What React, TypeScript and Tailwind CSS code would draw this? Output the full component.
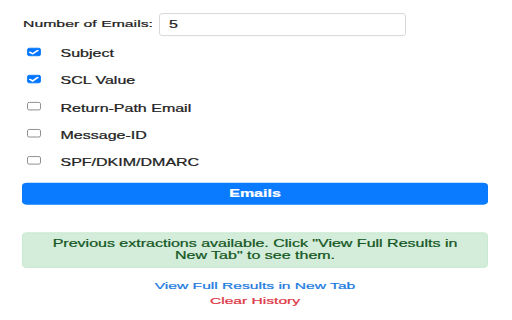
import React from "react";

const items: { label: string; checked: boolean }[] = [
  { label: "Subject", checked: true },
  { label: "SCL Value", checked: true },
  { label: "Return-Path Email", checked: false },
  { label: "Message-ID", checked: false },
  { label: "SPF/DKIM/DMARC", checked: false },
];

function Box({ checked }: { checked: boolean }) {
  return (
    <span className="relative ml-[5px] mb-[6px] w-[13.5px] h-[13.5px] shrink-0">
      <input
        type="checkbox"
        defaultChecked={checked}
        className="appearance-none m-0 block w-full h-full rounded-[2.5px] border border-[#767676] bg-white checked:bg-[#0075ff] checked:border-[#0075ff]"
      />
      {checked && (
        <svg
          viewBox="0 0 14 14"
          className="absolute inset-0 w-full h-full pointer-events-none"
        >
          <path
            d="M3 7.2 L5.8 9.8 L11 4.2"
            fill="none"
            stroke="white"
            strokeWidth="2.2"
            strokeLinecap="round"
            strokeLinejoin="round"
          />
        </svg>
      )}
    </span>
  );
}

export default function App() {
  return (
    <div className="w-[512px] h-[320px] overflow-hidden bg-white">
      <div className="origin-top-left scale-y-[0.63] w-[512px] pt-[20.6px] pl-[22px] pr-[24px] font-['Liberation_Sans',Arial,sans-serif] text-[16px] leading-[1.2] text-[#222] [-webkit-text-stroke:0.35px]">
        <div className="flex items-center h-[36.5px]">
          <label className="ml-[1px] text-[15.8px]">Number of Emails:</label>
          <input
            className="ml-[6px] w-[247px] h-full border border-[#cfcfcf] rounded-[4px] pl-[9px] text-[16px] text-[#222] outline-none font-['Liberation_Sans',Arial,sans-serif]"
            value="5"
            readOnly
          />
        </div>
        <div className="mt-[7px] flex flex-col">
          {items.map((it) => (
            <label key={it.label} className="flex items-center h-[43px]">
              <Box checked={it.checked} />
              <span className="ml-[20px]">{it.label}</span>
            </label>
          ))}
        </div>
        <button className="mt-[10.5px] h-[35px] w-full bg-[#0a7bff] text-white font-bold rounded-[5px] text-[16px]">
          Emails
        </button>
        <div className="mt-[44px] h-[56px] flex items-center justify-center px-[20px] bg-[#d4edda] border border-[#c3e6cb] rounded-[5px] text-[#155724] text-center leading-[18.5px]">
          Previous extractions available. Click "View Full Results in New Tab" to see them.
        </div>
        <div className="mt-[15px] flex flex-col items-center leading-[25px] text-[15.6px]">
          <a className="text-[#1a7ae0] cursor-pointer">View Full Results in New Tab</a>
          <a className="text-[#dc3545] cursor-pointer">Clear History</a>
        </div>
      </div>
    </div>
  );
}
